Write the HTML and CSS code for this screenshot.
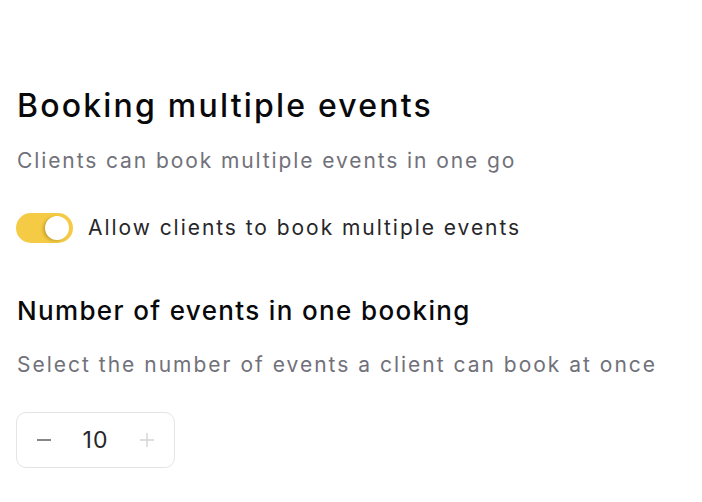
FILE: index.html
```html
<!DOCTYPE html>
<html lang="en">
<head>
<meta charset="utf-8">
<link rel="stylesheet" href="styles.css">
</head>
<body>
<main class="page">
  <h1 class="title">Booking multiple events</h1>
  <p class="subtitle">Clients can book multiple events in one go</p>
  <label class="toggle-row">
    <span class="toggle"><span class="knob"></span></span>
    <span class="toggle-label">Allow clients to book multiple events</span>
  </label>
  <h2 class="heading">Number of events in one booking</h2>
  <p class="subtitle sub2">Select the number of events a client can book at once</p>
  <div class="stepper">
    <button class="step-btn">
      <svg width="16" height="16" viewBox="0 0 16 16"><path d="M1 8h14" stroke="#52525b" stroke-width="1.4" fill="none"/></svg>
    </button>
    <span class="value">10</span>
    <button class="step-btn disabled">
      <svg width="16" height="16" viewBox="0 0 16 16"><path d="M1 8h14M8 1v14" stroke="#d4d4d8" stroke-width="1.4" fill="none"/></svg>
    </button>
  </div>
</main>
</body>
</html>
```
FILE: styles.css
```css
html, body {
  margin: 0;
  padding: 0;
  background: #ffffff;
}
body {
  font-family: Inter, "Noto Sans", sans-serif;
}
.page {
  display: flex;
  flex-direction: column;
  align-items: flex-start;
  padding: 88px 0 0 17px;
}
.title {
  margin: 0;
  font-size: 32px;
  line-height: 36px;
  font-weight: 500;
  color: #09090b;
  letter-spacing: 2.2px;
}
.subtitle {
  margin: 23px 0 0;
  font-size: 21px;
  line-height: 28px;
  color: #71717a;
  font-weight: 400;
  letter-spacing: 1.9px;
}
.toggle-row {
  display: flex;
  align-items: center;
  gap: 15px;
  margin-top: 38px;
  height: 30px;
}
.toggle {
  position: relative;
  width: 57px;
  height: 30px;
  border-radius: 15px;
  background: #f5cb45;
  display: block;
  margin-left: -1px;
}
.knob {
  position: absolute;
  top: 3px;
  right: 4px;
  width: 24px;
  height: 24px;
  border-radius: 50%;
  background: #fff;
  box-shadow: -2px 1px 3px rgba(120, 90, 0, 0.35);
}
.toggle-label {
  font-size: 21px;
  line-height: 28px;
  color: #27272a;
  letter-spacing: 1.95px;
}
.heading {
  margin: 52px 0 0;
  font-size: 26px;
  line-height: 32px;
  font-weight: 500;
  color: #09090b;
  letter-spacing: 1.35px;
}
.sub2 {
  margin-top: 24px;
  letter-spacing: 2px;
}
.stepper {
  margin-top: 33px;
  margin-left: -1px;
  width: 159px;
  height: 56px;
  box-sizing: border-box;
  border: 1px solid #e4e4e7;
  border-radius: 10px;
  display: flex;
  align-items: center;
  justify-content: space-between;
  padding: 0 18px;
}
.step-btn {
  background: none;
  border: none;
  padding: 0;
  width: 18px;
  height: 18px;
  display: flex;
  align-items: center;
  justify-content: center;
}
.value {
  font-size: 23px;
  color: #27272a;
  letter-spacing: 1px;
}
```
